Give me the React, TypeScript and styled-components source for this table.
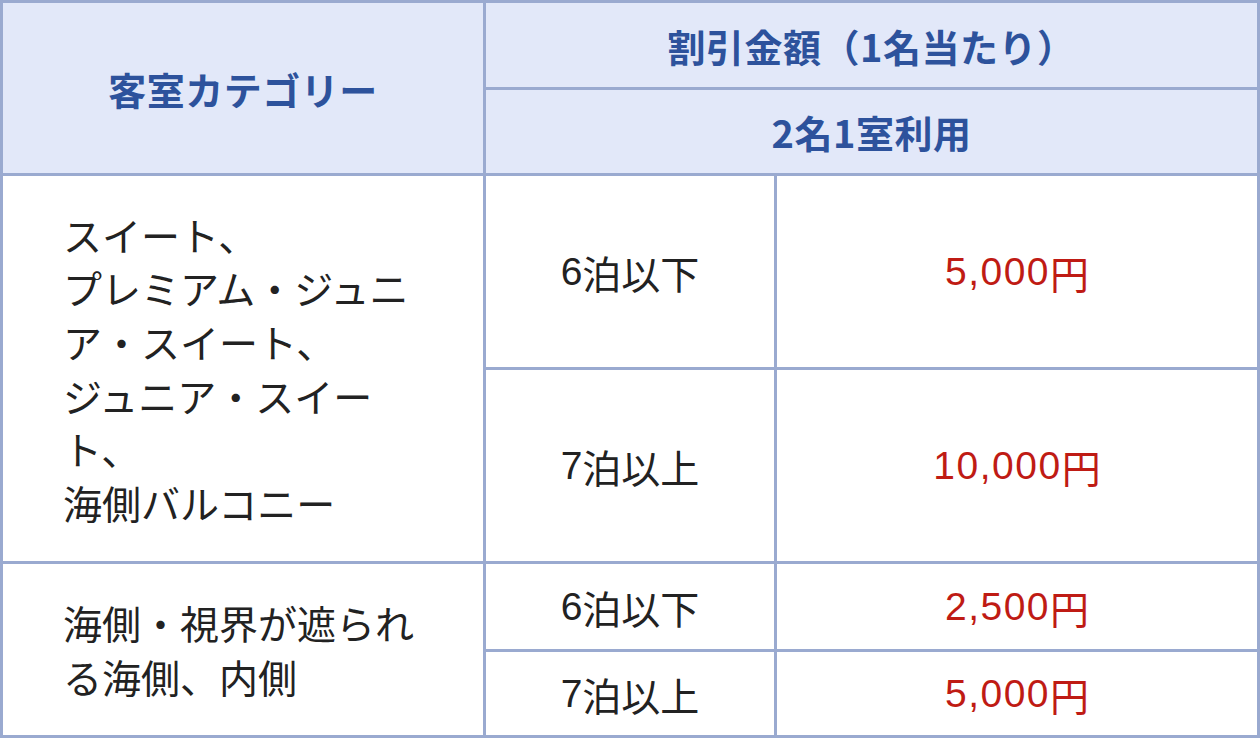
import styled, { createGlobalStyle } from "styled-components";

const borderColor = "#9aaad0";
const headBg = "#e2e8f9";
const headText = "#2d529c";
const bodyText = "#222222";
const priceRed = "#bf1b14";

const GlobalStyle = createGlobalStyle`
    html, body {
        margin: 0;
        padding: 0;
        background: #ffffff;
    }
    body {
        font-family: "Liberation Sans", "Noto Sans CJK JP", sans-serif;
    }
`

const Table = styled.div`
    display: grid;
    grid-template-columns: 480px 288px 480px;
    grid-template-rows: 84px 83px 191px 191px 85px 83px;
    gap: 3px;
    padding: 3px;
    width: 1260px;
    height: 738px;
    box-sizing: border-box;
    background: ${borderColor};
`

const HeadCell = styled.div<{ $span?: number; $rows?: number }>`
    grid-column: span ${p => p.$span ?? 1};
    grid-row: span ${p => p.$rows ?? 1};
    background: ${headBg};
    color: ${headText};
    font-family: "Noto Sans CJK JP", "Liberation Sans", sans-serif;
    font-weight: 700;
    font-size: 38px;
    display: flex;
    align-items: center;
    justify-content: center;
    letter-spacing: 0.5px;
`

const Category = styled.div<{ $rows: number }>`
    grid-row: span ${p => p.$rows};
    background: #ffffff;
    color: ${bodyText};
    font-family: "Noto Sans CJK JP", sans-serif;
    font-size: 39px;
    line-height: 1.375;
    display: flex;
    align-items: center;
    padding: 0 60px;
`

const Nights = styled.div`
    background: #ffffff;
    color: ${bodyText};
    font-size: 39px;
    display: flex;
    align-items: center;
    justify-content: center;
`

const Price = styled(Nights)`
    color: ${priceRed};
    letter-spacing: 1.5px;
`

const Kanji = styled.span`
    font-family: "Noto Sans CJK JP", sans-serif;
    letter-spacing: 0;
`

interface Group {
    category: string[];
    rows: { nights: string; amount: string }[];
}

const groups: Group[] = [
    {
        category: ["スイート、", "プレミアム・ジュニア・スイート、", "ジュニア・スイート、", "海側バルコニー"],
        rows: [
            { nights: "6", amount: "5,000" },
            { nights: "7", amount: "10,000" },
        ],
    },
    {
        category: ["海側・視界が遮られる海側、内側"],
        rows: [
            { nights: "6", amount: "2,500" },
            { nights: "7", amount: "5,000" },
        ],
    },
]

const NightsLabel = ({ n }: { n: string }) => (
    <Nights>
        {n}
        <Kanji>{n === "6" ? "泊以下" : "泊以上"}</Kanji>
    </Nights>
)

const App = () => {
    return (
        <>
            <GlobalStyle />
            <Table>
                <HeadCell $rows={2}>客室カテゴリー</HeadCell>
                <HeadCell $span={2}>割引金額（1名当たり）</HeadCell>
                <HeadCell $span={2}>2名1室利用</HeadCell>
                {groups.map((group, gi) => (
                    <>
                        <Category key={`c${gi}`} $rows={group.rows.length}>
                            <div>
                                {group.category.map((line, li) => (
                                    <div key={li}>{line}</div>
                                ))}
                            </div>
                        </Category>
                        {group.rows.map((row, ri) => (
                            <>
                                <NightsLabel key={`n${gi}${ri}`} n={row.nights} />
                                <Price key={`p${gi}${ri}`}>
                                    {row.amount}
                                    <Kanji>円</Kanji>
                                </Price>
                            </>
                        ))}
                    </>
                ))}
            </Table>
        </>
    )
}

export default App;
